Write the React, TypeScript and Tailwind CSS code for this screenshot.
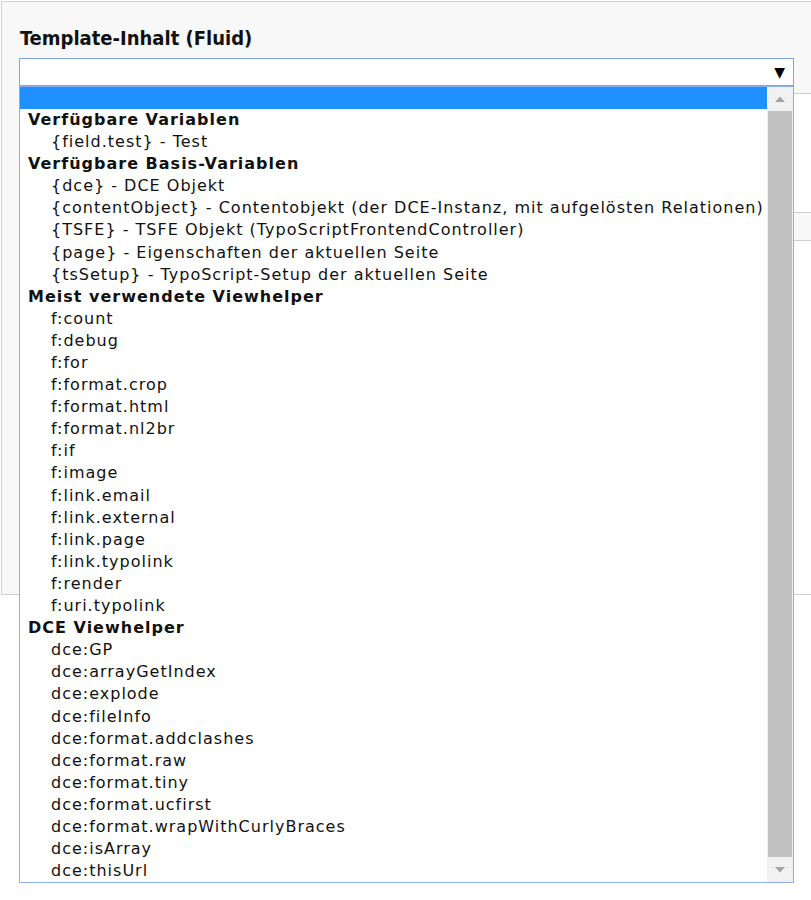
import React from "react";

type Row = { t: string; g?: boolean };

const rows: Row[] = [
  { t: "Verfügbare Variablen", g: true },
  { t: "{field.test} - Test" },
  { t: "Verfügbare Basis-Variablen", g: true },
  { t: "{dce} - DCE Objekt" },
  { t: "{contentObject} - Contentobjekt (der DCE-Instanz, mit aufgelösten Relationen)" },
  { t: "{TSFE} - TSFE Objekt (TypoScriptFrontendController)" },
  { t: "{page} - Eigenschaften der aktuellen Seite" },
  { t: "{tsSetup} - TypoScript-Setup der aktuellen Seite" },
  { t: "Meist verwendete Viewhelper", g: true },
  { t: "f:count" },
  { t: "f:debug" },
  { t: "f:for" },
  { t: "f:format.crop" },
  { t: "f:format.html" },
  { t: "f:format.nl2br" },
  { t: "f:if" },
  { t: "f:image" },
  { t: "f:link.email" },
  { t: "f:link.external" },
  { t: "f:link.page" },
  { t: "f:link.typolink" },
  { t: "f:render" },
  { t: "f:uri.typolink" },
  { t: "DCE Viewhelper", g: true },
  { t: "dce:GP" },
  { t: "dce:arrayGetIndex" },
  { t: "dce:explode" },
  { t: "dce:fileInfo" },
  { t: "dce:format.addclashes" },
  { t: "dce:format.raw" },
  { t: "dce:format.tiny" },
  { t: "dce:format.ucfirst" },
  { t: "dce:format.wrapWithCurlyBraces" },
  { t: "dce:isArray" },
  { t: "dce:thisUrl" },
];

export default function App() {
  return (
    <div className="relative w-[811px] h-[900px] bg-white overflow-hidden font-['DejaVu_Sans',sans-serif] text-black">
      <div className="mt-px ml-px h-[594px] bg-[#f8f8f8] border-t border-l border-b border-[#d0d0d0] flex flex-col">
        <div className="pt-[24px] pl-[18px] h-[56px] text-[20px] font-bold leading-[24px] font-['DejaVu_Sans_Condensed','DejaVu_Sans',sans-serif] text-[#111]">
          Template-Inhalt (Fluid)
        </div>
        <div className="relative ml-[17px] w-[775px] h-[28px] bg-white border border-[#7fa6e6] flex items-center justify-end pr-[8px]">
          <span className="text-[14px] leading-none">▼</span>
          <div className="absolute left-[-1px] top-[27px] w-[775px] h-[797px] bg-white border border-[#8fb0e6] flex z-10">
            <div className="flex-1 flex flex-col">
              <div className="h-[22px] bg-[#1e90ff]" />
              {rows.map((r, i) => (
                <div
                  key={i}
                  className={
                    "h-[22.12px] leading-[22px] text-[16px] tracking-[1px] whitespace-nowrap text-[#111] " +
                    (r.g ? "font-bold pl-[8px]" : "pl-[31px]")
                  }
                >
                  {r.t}
                </div>
              ))}
            </div>
            <div className="w-[26px] bg-[#f1f1f1] flex flex-col">
              <div className="h-[24px] flex items-center justify-center">
                <svg width="12" height="8" viewBox="0 0 12 8">
                  <path d="M1 7 L6 1.5 L11 7 Z" fill="#a3a3a3" />
                </svg>
              </div>
              <div className="flex-1 mx-[1px] bg-[#c1c1c1]" />
              <div className="h-[25px] flex items-center justify-center">
                <svg width="12" height="8" viewBox="0 0 12 8">
                  <path d="M1 1 L6 6.5 L11 1 Z" fill="#a3a3a3" />
                </svg>
              </div>
            </div>
          </div>
        </div>
        <div className="ml-[17px] mt-[7px] flex-1 flex flex-col">
          <div className="h-[119px] bg-white border-t border-[#cfcfcf]" />
          <div className="h-[29px] bg-[#f8f8f8] border-t border-b border-[#cfcfcf]" />
          <div className="flex-1 bg-white" />
        </div>
      </div>
    </div>
  );
}
